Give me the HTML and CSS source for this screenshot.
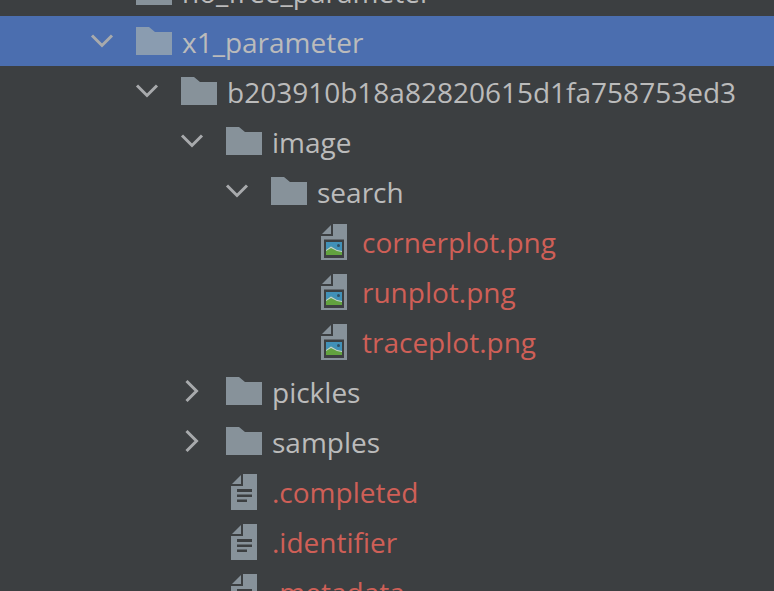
FILE: index.html
```html
<!DOCTYPE html>
<html lang="en">
<head>
    <meta charset="UTF-8">
    <title>Project tree</title>
    <link rel="stylesheet" href="styles.css">
</head>
<body>
    <svg class="sprites" width="0" height="0">
        <symbol id="open" viewBox="0 0 24 16">
            <path d="M2 2.5 12 12.5 22 2.5" fill="none" stroke="#a8aaac" stroke-width="3"/>
        </symbol>
        <symbol id="closed" viewBox="0 0 16 24">
            <path d="M2.5 2 12.5 12 2.5 22" fill="none" stroke="#a8aaac" stroke-width="3"/>
        </symbol>
        <symbol id="folder" viewBox="0 0 36 28">
            <path d="M0 0H13L19 5H36V28H0Z" fill="#9aa7b0" opacity=".8"/>
        </symbol>
        <symbol id="textfile" viewBox="0 0 26 36">
            <path d="M12 0H26V36H0V12H12Z" fill="#9aa7b0" opacity=".8"/>
            <path d="M10 1V10H1Z" fill="#9aa7b0" opacity=".8"/>
            <path d="M6 15H21V18H6ZM6 20.5H21V23H6ZM6 25.5H16V28H6Z" fill="#3c3f41"/>
        </symbol>
        <symbol id="imagefile" viewBox="0 0 26 36">
            <path d="M12 0H26V36H0V12H12Z" fill="#9aa7b0" opacity=".8"/>
            <path d="M10 1V10H1Z" fill="#9aa7b0" opacity=".8"/>
            <path d="M3 15.5H23V34H3Z" fill="#3c3f41"/>
            <path d="M5 18H21V31H5Z" fill="#4191b8"/>
            <path d="M5 31V26L10 22.5 16 26 21 27V31Z" fill="#62a33f"/>
            <path d="M5 26 10 22.5 16 26 21 27V28L16 27 10 24 5 27Z" fill="#c3d0d6"/>
            <circle cx="17.5" cy="21.5" r="1.5" fill="#2f4f63"/>
        </symbol>
    </svg>

    <div class="tree">
        <div class="row depth-1">
            <svg class="arrow-open"><use href="#open"/></svg>
            <svg class="folder"><use href="#folder"/></svg>
            <span class="name">no_free_parameter</span>
        </div>
        <div class="row depth-1 selected">
            <svg class="arrow-open"><use href="#open"/></svg>
            <svg class="folder"><use href="#folder"/></svg>
            <span class="name">x1_parameter</span>
        </div>
        <div class="row depth-2">
            <svg class="arrow-open"><use href="#open"/></svg>
            <svg class="folder"><use href="#folder"/></svg>
            <span class="name">b203910b18a82820615d1fa758753ed3</span>
        </div>
        <div class="row depth-3">
            <svg class="arrow-open"><use href="#open"/></svg>
            <svg class="folder"><use href="#folder"/></svg>
            <span class="name">image</span>
        </div>
        <div class="row depth-4">
            <svg class="arrow-open"><use href="#open"/></svg>
            <svg class="folder"><use href="#folder"/></svg>
            <span class="name">search</span>
        </div>
        <div class="row depth-5 ignored">
            <svg class="file"><use href="#imagefile"/></svg>
            <span class="name">cornerplot.png</span>
        </div>
        <div class="row depth-5 ignored">
            <svg class="file"><use href="#imagefile"/></svg>
            <span class="name">runplot.png</span>
        </div>
        <div class="row depth-5 ignored">
            <svg class="file"><use href="#imagefile"/></svg>
            <span class="name">traceplot.png</span>
        </div>
        <div class="row depth-3">
            <svg class="arrow-closed"><use href="#closed"/></svg>
            <svg class="folder"><use href="#folder"/></svg>
            <span class="name">pickles</span>
        </div>
        <div class="row depth-3">
            <svg class="arrow-closed"><use href="#closed"/></svg>
            <svg class="folder"><use href="#folder"/></svg>
            <span class="name">samples</span>
        </div>
        <div class="row depth-3 ignored">
            <svg class="file"><use href="#textfile"/></svg>
            <span class="name">.completed</span>
        </div>
        <div class="row depth-3 ignored">
            <svg class="file"><use href="#textfile"/></svg>
            <span class="name">.identifier</span>
        </div>
        <div class="row depth-3 ignored">
            <svg class="file"><use href="#textfile"/></svg>
            <span class="name">.metadata</span>
        </div>
    </div>
</body>
</html>
```

FILE: styles.css
```css
body {
    margin: 0;
    height: 100vh;
    overflow: hidden;
    background: #3c3f41;
    font-family: "Open Sans", sans-serif;
    font-size: 28px;
    color: #bbbbbb;
}
.sprites {
    display: none;
}
.tree {
    margin-top: -34px;
}
.row {
    display: flex;
    align-items: center;
    height: 50px;
    white-space: nowrap;
}
.name {
    padding-top: 2px;
}
.selected {
    background: #4b6eaf;
}
.ignored {
    color: #cf5f57;
}
.depth-1 { padding-left: 90px; }
.depth-2 { padding-left: 135px; }
.depth-3 { padding-left: 180px; }
.depth-4 { padding-left: 225px; }
.depth-5 { padding-left: 270px; }
.arrow-open {
    width: 24px;
    height: 16px;
    margin-right: 22px;
}
.arrow-closed {
    width: 16px;
    height: 24px;
    margin: 0 26px 0 4px;
}
.folder {
    width: 36px;
    height: 28px;
    margin-right: 10px;
}
.file {
    width: 26px;
    height: 36px;
    margin: 2px 15px 0 51px;
}
```
